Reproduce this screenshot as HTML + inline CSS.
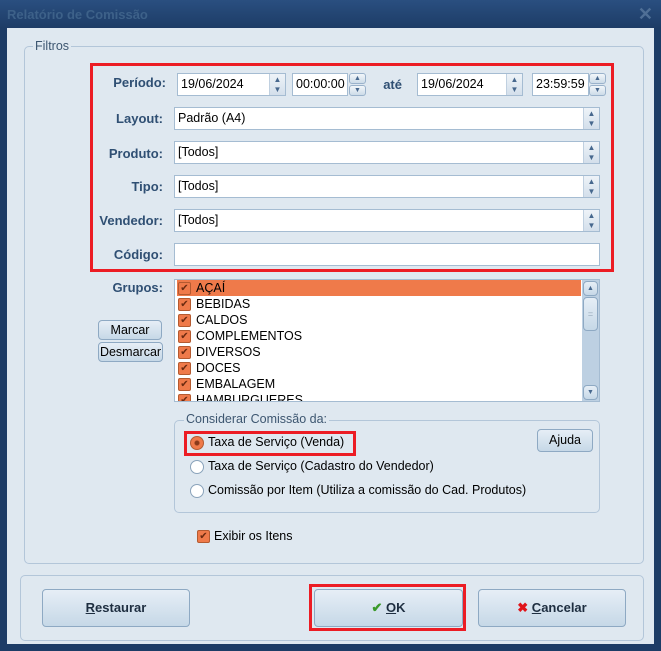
<!DOCTYPE html>
<html><head><meta charset="utf-8"><style>
*{box-sizing:border-box;margin:0;padding:0}
body{width:661px;height:651px;background:#1d3c66;font-family:"Liberation Sans",sans-serif;font-size:12.5px;color:#000;position:relative;overflow:hidden}
.a{position:absolute}
.title{left:0;top:0;width:661px;height:28px;background:linear-gradient(#2a4f80,#1d3c66);}
.title span{position:absolute;left:7px;top:7px;color:#3d6189;font-weight:bold;font-size:13px}
.x{right:8px;top:4px;color:#4f6f96;font-size:18px;font-weight:bold}
.client{left:7px;top:28px;width:647px;height:616px;background:#dfe8f0}
.grp{border:1px solid #b3c6d9;border-radius:5px}
.lbl{color:#2f4f73;font-weight:bold;text-align:right;width:80px;font-size:13px}
.inp{background:#fff;border:1px solid #a5bcd2;height:23px;line-height:21px;padding-left:3px}
.spin{position:absolute;right:0;top:0;width:16px;height:100%;background:linear-gradient(#eef3f8,#d3dfeb);border-left:1px solid #c0d0e0;color:#47688e;font-size:8px;text-align:center;line-height:10px;padding-top:1px}
.sp2{position:absolute;right:0;width:17px;height:11px;background:linear-gradient(#f2f6fa,#cddbe8);border:1px solid #9ab2cb;border-radius:3px;color:#47688e;font-size:7px;text-align:center;line-height:9px}
.btn{background:linear-gradient(#e6eef6,#c6d8e7);border:1px solid #8ea9c3;border-radius:4px;text-align:center}
.red{border:3px solid #ec1c24}
.cb{width:13px;height:13px;background:#ef7a4a;border:1px solid #b45a30;border-radius:2px;color:#6b2a10;font-size:10px;line-height:11px;text-align:center}
.li{position:absolute;left:2px;height:16px;line-height:16px;width:404px}
.li .cb{position:absolute;left:1px;top:2px}
.li span{position:absolute;left:19px}
.rad{width:14px;height:14px;border-radius:50%;background:#fff;border:1px solid #8aa3bb}
</style></head><body>
<div class="a title"><span>Relatório de Comissão</span><div class="a x">✕</div></div>
<div class="a client"></div>
<div class="a grp" style="left:24px;top:46px;width:620px;height:518px"></div>
<div class="a" style="left:33px;top:39px;background:#dfe8f0;color:#3d5670;padding:0 2px">Filtros</div>
<div class="a red" style="left:90px;top:63px;width:524px;height:209px"></div>

<div class="a lbl" style="left:86px;top:75px">Período:</div>
<div class="a inp" style="left:177px;top:73px;width:109px">19/06/2024<div class="spin">▲<br>▼</div></div>
<div class="a inp" style="left:292px;top:73px;width:56px">00:00:00</div>
<div class="a sp2" style="left:349px;top:73px">▲</div><div class="a sp2" style="left:349px;top:85px">▼</div>
<div class="a lbl" style="left:349px;top:77px;width:53px">até</div>
<div class="a inp" style="left:417px;top:73px;width:106px">19/06/2024<div class="spin">▲<br>▼</div></div>
<div class="a inp" style="left:532px;top:73px;width:57px">23:59:59</div>
<div class="a sp2" style="left:589px;top:73px">▲</div><div class="a sp2" style="left:589px;top:85px">▼</div>

<div class="a lbl" style="left:83px;top:111px">Layout:</div>
<div class="a inp" style="left:174px;top:107px;width:426px">Padrão (A4)<div class="spin">▲<br>▼</div></div>
<div class="a lbl" style="left:83px;top:146px">Produto:</div>
<div class="a inp" style="left:174px;top:141px;width:426px">[Todos]<div class="spin">▲<br>▼</div></div>
<div class="a lbl" style="left:83px;top:179px">Tipo:</div>
<div class="a inp" style="left:174px;top:175px;width:426px">[Todos]<div class="spin">▲<br>▼</div></div>
<div class="a lbl" style="left:83px;top:213px">Vendedor:</div>
<div class="a inp" style="left:174px;top:209px;width:426px">[Todos]<div class="spin">▲<br>▼</div></div>
<div class="a lbl" style="left:83px;top:247px">Código:</div>
<div class="a inp" style="left:174px;top:243px;width:426px"></div>

<div class="a lbl" style="left:83px;top:280px">Grupos:</div>
<div class="a btn" style="left:98px;top:320px;width:64px;height:20px;line-height:18px">Marcar</div>
<div class="a btn" style="left:98px;top:342px;width:65px;height:20px;line-height:18px">Desmarcar</div>
<div class="a" style="left:174px;top:279px;width:426px;height:123px;background:#fff;border:1px solid #a5bcd2;overflow:hidden">
<div class="li" style="top:0;background:#ef7a4a"><div class="cb">✔</div><span>AÇAÍ</span></div>
<div class="li" style="top:16px"><div class="cb">✔</div><span>BEBIDAS</span></div>
<div class="li" style="top:32px"><div class="cb">✔</div><span>CALDOS</span></div>
<div class="li" style="top:48px"><div class="cb">✔</div><span>COMPLEMENTOS</span></div>
<div class="li" style="top:64px"><div class="cb">✔</div><span>DIVERSOS</span></div>
<div class="li" style="top:80px"><div class="cb">✔</div><span>DOCES</span></div>
<div class="li" style="top:96px"><div class="cb">✔</div><span>EMBALAGEM</span></div>
<div class="li" style="top:112px"><div class="cb">✔</div><span>HAMBURGUERES</span></div>
<div class="a" style="left:407px;top:0;width:17px;height:121px;background:#bdd0e2">
<div class="a btn" style="left:1px;top:1px;width:15px;height:15px;font-size:7px;line-height:13px;color:#47688e">▲</div>
<div class="a btn" style="left:1px;top:17px;width:15px;height:34px;font-size:9px;line-height:32px;color:#9ab">=</div>
<div class="a btn" style="left:1px;top:105px;width:15px;height:15px;font-size:7px;line-height:13px;color:#47688e">▼</div>
</div></div>

<div class="a grp" style="left:174px;top:420px;width:426px;height:93px"></div>
<div class="a" style="left:184px;top:412px;background:#dfe8f0;color:#3d5670;padding:0 2px">Considerar Comissão da:</div>
<div class="a red" style="left:184px;top:431px;width:172px;height:25px"></div>
<div class="a rad" style="left:190px;top:436px;background:radial-gradient(#8a3a1a 2px,#ef7a4a 3px);border-color:#b45a30"></div>
<div class="a" style="left:208px;top:435px">Taxa de Serviço (Venda)</div>
<div class="a rad" style="left:190px;top:460px"></div>
<div class="a" style="left:208px;top:459px">Taxa de Serviço (Cadastro do Vendedor)</div>
<div class="a rad" style="left:190px;top:484px"></div>
<div class="a" style="left:208px;top:483px">Comissão por Item (Utiliza a comissão do Cad. Produtos)</div>
<div class="a btn" style="left:537px;top:429px;width:56px;height:23px;line-height:21px">Ajuda</div>
<div class="a cb" style="left:197px;top:530px">✔</div>
<div class="a" style="left:214px;top:529px">Exibir os Itens</div>

<div class="a grp" style="left:20px;top:575px;width:624px;height:66px"></div>
<div class="a btn" style="left:42px;top:589px;width:148px;height:38px;line-height:36px;font-weight:bold;color:#1e2e40;font-size:13px"><u>R</u>estaurar</div>
<div class="a red" style="left:309px;top:584px;width:157px;height:47px"></div>
<div class="a btn" style="left:314px;top:589px;width:149px;height:38px;line-height:36px;font-weight:bold;color:#1e2e40;font-size:13px"><span style="color:#3a9a2a">✔</span> <u>O</u>K</div>
<div class="a btn" style="left:478px;top:589px;width:148px;height:38px;line-height:36px;font-weight:bold;color:#1e2e40;font-size:13px"><span style="color:#e0141a">✖</span> <u>C</u>ancelar</div>
</body></html>
